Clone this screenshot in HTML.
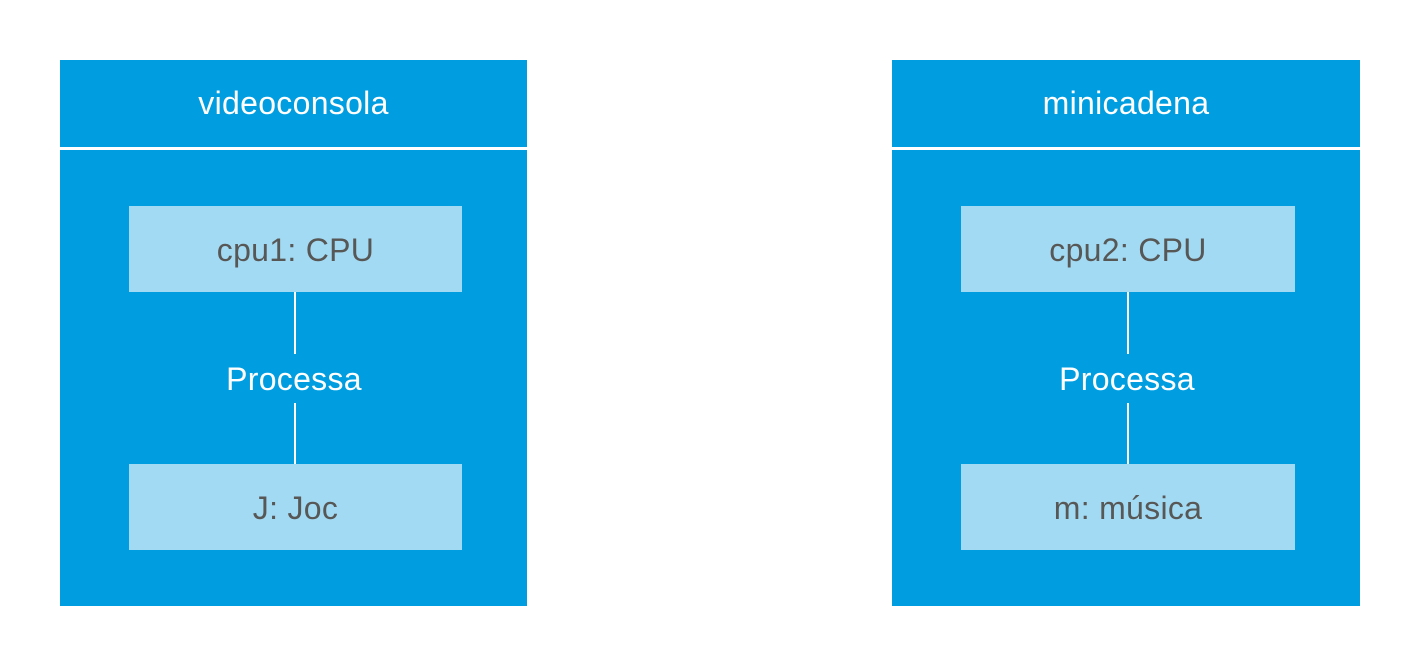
<!DOCTYPE html>
<html><head><style>
body{margin:0;width:1420px;height:666px;background:#fff;position:relative;font-family:"Liberation Sans",Arial,sans-serif;overflow:hidden}
.a{position:absolute}
.hd{background:#009ee0;color:#fff;font-size:32px;letter-spacing:0.3px;display:flex;align-items:center;justify-content:center}
.bd{background:#009ee0}
.in{background:#a3daf3;color:#575756;font-size:32px;letter-spacing:0.3px;display:flex;align-items:center;justify-content:center;padding-top:2px;box-sizing:border-box}
.ln{background:#fff;width:2px}
.pr{color:#fff;font-size:32px;letter-spacing:0.3px;text-align:center;width:200px;line-height:34px}
</style></head><body>
<div class="a hd" style="left:60px;top:60px;width:467px;height:87px">videoconsola</div>
<div class="a bd" style="left:60px;top:150px;width:467px;height:456px"></div>
<div class="a in" style="left:129px;top:206px;width:333px;height:86px">cpu1: CPU</div>
<div class="a ln" style="left:294px;top:292px;height:62px"></div>
<div class="a pr" style="left:194px;top:362px">Processa</div>
<div class="a ln" style="left:294px;top:403px;height:61px"></div>
<div class="a in" style="left:129px;top:464px;width:333px;height:86px">J: Joc</div>

<div class="a hd" style="left:892px;top:60px;width:468px;height:87px">minicadena</div>
<div class="a bd" style="left:892px;top:150px;width:468px;height:456px"></div>
<div class="a in" style="left:961px;top:206px;width:334px;height:86px">cpu2: CPU</div>
<div class="a ln" style="left:1127px;top:292px;height:62px"></div>
<div class="a pr" style="left:1027px;top:362px">Processa</div>
<div class="a ln" style="left:1127px;top:403px;height:61px"></div>
<div class="a in" style="left:961px;top:464px;width:334px;height:86px">m: música</div>
</body></html>
